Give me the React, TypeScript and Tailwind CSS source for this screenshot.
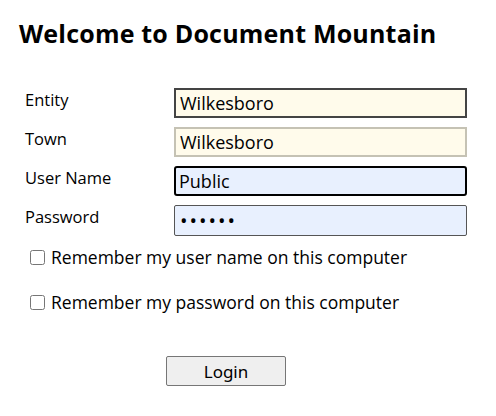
import React from 'react';

const font = { fontFamily: '"Trebuchet MS", "Open Sans", "DejaVu Sans", sans-serif' };

export default function App() {
  return (
    <div className="w-[496px] h-[416px] bg-white text-black overflow-hidden" style={font}>
      <h1 className="pl-[19px] pt-[18px] text-[25px] leading-[30px] font-bold tracking-[0.2px]">
        Welcome to Document Mountain
      </h1>

      <div className="mt-[40px] pl-[25px] grid grid-cols-[149px_293px] gap-y-[9px] text-[16.5px]">
        <label className="pt-[1px] leading-[22px]">Entity</label>
        <input
          readOnly
          value="Wilkesboro"
          className="h-[30px] px-[4px] bg-[#fffbeb] border-2 border-[#444] text-[18px] outline-none"
        />
        <label className="pt-[1px] leading-[22px]">Town</label>
        <input
          readOnly
          value="Wilkesboro"
          className="h-[30px] px-[4px] bg-[#fffbeb] border-2 border-[#c5c2b4] text-[18px] outline-none"
        />
        <label className="pt-[1px] leading-[22px]">User Name</label>
        <input
          readOnly
          value="Public"
          className="h-[30px] px-[3px] bg-[#e8f0fe] border-2 border-black rounded-[3px] text-[18px] outline-none"
        />
        <label className="pt-[1px] leading-[22px]">Password</label>
        <input
          readOnly
          type="password"
          value="public"
          className="h-[31px] px-[5px] bg-[#e8f0fe] border border-[#555] rounded-[2px] text-[20px] outline-none tracking-[2px]"
        />
      </div>

      <div className="mt-[11px] pl-[30px] flex flex-col gap-[25px] text-[17.5px]">
        <label className="flex items-center gap-[6px] leading-[20px]">
          <input type="checkbox" className="w-[15px] h-[15px] m-0" />
          <span>Remember my user name on this computer</span>
        </label>
        <label className="flex items-center gap-[6px] leading-[20px]">
          <input type="checkbox" className="w-[15px] h-[15px] m-0" />
          <span>Remember my password on this computer</span>
        </label>
      </div>

      <div className="mt-[44px] pl-[166px]">
        <button
          className="w-[120px] h-[30px] bg-[#efefef] border border-[#767676] rounded-[2px] text-[17px] leading-none"
          style={{ fontFamily: '"Noto Sans", "Open Sans", sans-serif' }}
        >
          Login
        </button>
      </div>
    </div>
  );
}
